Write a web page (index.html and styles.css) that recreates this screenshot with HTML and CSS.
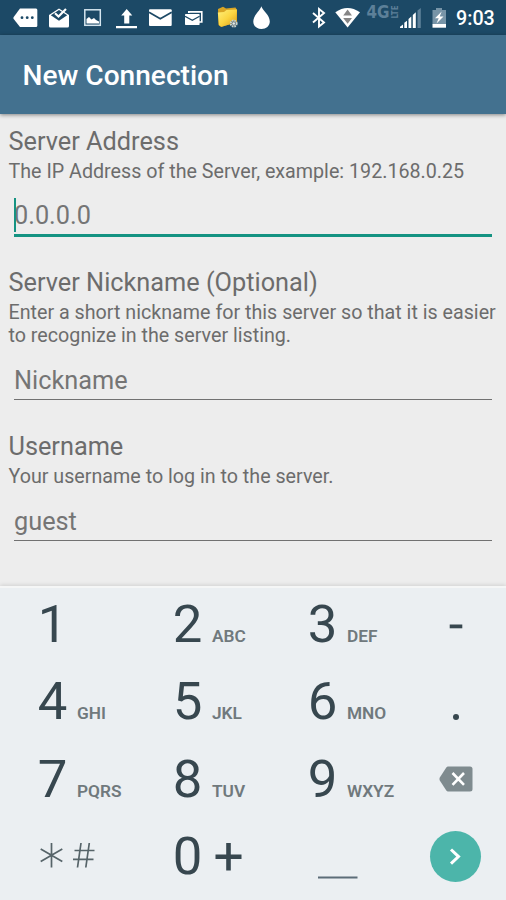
FILE: index.html
```html
<!DOCTYPE html>
<html lang="en">
<head>
<meta charset="utf-8">
<title>New Connection</title>
<link rel="stylesheet" href="styles.css">
</head>
<body>
<div class="screen">
  <div class="status">
    <div class="status-group">
      <svg class="icon" width="25" height="35" viewBox="13 0 25 35"><path d="M20 8.500H36Q37.300 8.500 37.300 10V25.500Q37.300 27 36 27H20L13.500 18.700Q13.200 17.700 13.700 17Z" fill="#fff"/><g fill="#1c4966"><circle cx="22" cy="17.700" r="1.400"/><circle cx="27.200" cy="17.700" r="1.400"/><circle cx="32.300" cy="17.700" r="1.400"/></g></svg>
      <svg class="icon" width="21" height="35" viewBox="49 0 21 35"><path d="M49 15L59 8.500L69 15V26Q69 27.500 67.500 27.500H50.500Q49 27.500 49 26Z" fill="#fff"/><path d="M50.800 15.200L59 10L67.200 15.200L59 20.700Z" fill="#1c4966"/><path d="M55 13.300L58.500 16.500L66 9" fill="none" stroke="#fff" stroke-width="2.200"/></svg>
      <svg class="icon" width="18" height="35" viewBox="84 0 18 35"><rect x="84.800" y="9.800" width="15.500" height="15.500" fill="none" stroke="#d5e5ef" stroke-width="1.500"/><path d="M86.500 23.500V19L89 17L91.500 19.500L94 18L96 20L99 21.500V23.500Z" fill="#fff"/></svg>
      <svg class="icon" width="22" height="35" viewBox="116 0 22 35"><path d="M126.700 9L132.300 15.500H129.300V23.500H124.200V15.500H121.200ZM116 26H137V28.200H116Z" fill="#fff"/></svg>
      <svg class="icon" width="24" height="35" viewBox="149 0 24 35"><rect x="149" y="9.300" width="22.700" height="16.700" rx="1" fill="#fff"/><path d="M149 12.300L160.300 18.700L171.700 12.300" fill="none" stroke="#1c4966" stroke-width="1.700"/></svg>
      <svg class="icon" width="19" height="35" viewBox="185 0 19 35"><path d="M188.800 13V11.900H201.800V22H199" fill="none" stroke="#fff" stroke-width="1.600"/><rect x="185" y="14" width="14.600" height="11" rx=".7" fill="#fff"/><path d="M185 16.300L192.300 20.300L199.600 16.300" fill="none" stroke="#1c4966" stroke-width="1.300"/></svg>
      <svg class="icon" width="22" height="35" viewBox="217 0 22 35">
        <defs><linearGradient id="folder" x2="1" y2="1"><stop stop-color="#fff07b"/><stop offset=".5" stop-color="#fbd541"/><stop offset="1" stop-color="#d99b17"/></linearGradient></defs>
        <path d="M218 9L223 6.800L226 8.500L235.500 7.500L237 10V22L221 27L218.500 25Z" fill="#d9a524"/><path d="M217.800 12.500L224 12L226.500 10L237 9.500L236 22.500L221.500 26.700L219 25Z" fill="url(#folder)"/><circle cx="233.700" cy="23.500" r="3" fill="#65787d" stroke="#cbd3ce" stroke-width="1.900" stroke-dasharray="1.600 .8"/><circle cx="233.700" cy="23.500" r="1.300" fill="#e7ece9"/></svg>
      <svg class="icon" width="18" height="35" viewBox="253 0 18 35"><path d="M261.300 6.300C263 11 269.800 15.200 269.800 21.500C269.800 26 266.200 29 261.500 29S253.300 26 253.300 21.500C253.300 15.200 260 11 261.300 6.300Z" fill="#fff"/></svg>
    </div>
    <div class="status-group">
      <svg class="icon" width="14" height="35" viewBox="312 0 14 35"><path d="M313 13L324 22.500L319 26.500V9L324 13L313 22.500" fill="none" stroke="#fff" stroke-width="1.900"/></svg>
      <svg class="icon" width="26" height="35" viewBox="335 0 26 35"><path d="M335.300 12.300Q347.500 3.500 360 12.300L347.600 27.500Z" fill="#fff"/><path d="M347.600 9.500L352 15.500H343.200ZM347.600 23.800L352 18H343.200Z" fill="#858585"/></svg>
      <svg class="icon network" width="32" height="35" viewBox="367 0 32 35"><text class="network-gen" transform="translate(366.500 18) scale(1.050 1)" textLength="22" lengthAdjust="spacingAndGlyphs">4G</text><text class="network-lte" transform="translate(397.500 18.500) rotate(-90)" textLength="13" lengthAdjust="spacingAndGlyphs">LTE</text></svg>
      <svg class="icon" width="22" height="35" viewBox="400 0 22 35"><path d="M417.500 10.500L420.800 8V28H417.500Z" fill="#5d8099"/><path d="M400 28V26.700L403 24.500V28ZM404.300 28V22.800L407 20.700V28ZM408.500 28V19L411.300 16.500V28ZM412.800 28V15L415.800 12.300V28Z" fill="#fff"/></svg>
      <svg class="icon" width="15" height="35" viewBox="432 0 15 35"><path d="M436 8H442V10H446V24.500H432.500V10H436Z" fill="#7794a7"/><path d="M432.500 24H446V27.700H432.500Z" fill="#fff"/><path d="M441.700 11.500L435 18.200H438.700L436.500 23.500L443.500 16.500H439.700Z" fill="#fff"/></svg>
      <span class="clock">9:03</span>
    </div>
  </div>
  <header class="appbar"><h1 class="title">New Connection</h1></header>
  <main class="form">
    <section class="field">
      <h2 class="label">Server Address</h2>
      <p class="help">The IP Address of the Server, example: 192.168.0.25</p>
      <div class="input input-active">0.0.0.0</div>
    </section>
    <section class="field">
      <h2 class="label">Server Nickname (Optional)</h2>
      <p class="help">Enter a short nickname for this server so that it is easier<br>to recognize in the server listing.</p>
      <div class="input">Nickname</div>
    </section>
    <section class="field">
      <h2 class="label">Username</h2>
      <p class="help">Your username to log in to the server.</p>
      <div class="input">guest</div>
    </section>
  </main>
  <div class="keypad">
    <div class="key"><span class="digit">1</span></div>
    <div class="key"><span class="digit">2</span><span class="letters">ABC</span></div>
    <div class="key"><span class="digit">3</span><span class="letters">DEF</span></div>
    <div class="key side"><svg width="14" height="73" viewBox="0 0 14 73"><path d="M.7 36.500H13.300V40.300H.7Z" fill="#37474f"/></svg></div>
    <div class="key"><span class="digit">4</span><span class="letters">GHI</span></div>
    <div class="key"><span class="digit">5</span><span class="letters">JKL</span></div>
    <div class="key"><span class="digit">6</span><span class="letters">MNO</span></div>
    <div class="key side"><svg width="8" height="73" viewBox="0 0 8 73"><circle cx="4" cy="52" r="3" fill="#37474f"/></svg></div>
    <div class="key"><span class="digit">7</span><span class="letters">PQRS</span></div>
    <div class="key"><span class="digit">8</span><span class="letters">TUV</span></div>
    <div class="key"><span class="digit">9</span><span class="letters">WXYZ</span></div>
    <div class="key side"><svg width="34" height="26" viewBox="0 0 34 26"><path d="M9 .5H31Q33.500 .5 33.500 3V23Q33.500 25.500 31 25.500H9Q8 25.500 7.300 24.500L.8 14.500Q0 13 .8 11.500L7.300 1.500Q8 .5 9 .5Z" fill="#7f8b8f"/><path d="M13.500 7L25 18.800M25 7L13.500 18.800" fill="none" stroke="#fff" stroke-width="2.600"/></svg></div>
    <div class="key"><svg class="symbols" width="60" height="77" viewBox="0 0 60 77"><g fill="none" stroke="#566469" stroke-width="1.700"><path d="M14.500 26V50.500M3.700 32L25.300 44.500M25.300 32L3.700 44.500M44 26L40.500 50.500M52.300 26L48.800 50.500M37.500 33.500H57.500M36 42.300H56.500"/></g></svg></div>
    <div class="key"><span class="digit">0</span><svg class="plus" width="28" height="77" viewBox="0 0 28 77"><path d="M13.500 26V53.500M.5 39.700H26.500" fill="none" stroke="#37474f" stroke-width="4.600"/></svg></div>
    <div class="key"><svg class="space" width="40" height="77" viewBox="0 0 40 77"><path d="M0 60.500H39.500" stroke="#5c6d78" stroke-width="2"/></svg></div>
    <div class="key side"><div class="go"><svg width="51" height="51" viewBox="0 0 51 51"><path d="M21 18.500L28.500 25.600L21 32.700" fill="none" stroke="#fff" stroke-width="3"/></svg></div></div>
  </div>
</div>
</body>
</html>
```

FILE: styles.css
```css
* { box-sizing: border-box; }
body { margin: 0; font-family: Roboto, "Liberation Sans", sans-serif; }
h1, h2, p { margin: 0; font-weight: 400; }
svg { display: block; flex: none; }
.screen { width: 506px; height: 900px; display: flex; flex-direction: column; background: #ededed; overflow: hidden; }

.status { height: 35px; flex: none; display: flex; justify-content: space-between; padding: 0 11px 0 13px; background: #1c4966; color: #fff; }
.status-group { display: flex; }
.status-group:first-child { gap: 12px; }
.status-group:first-child .icon:nth-child(2) { margin-left: -1px; }
.status-group:first-child .icon:nth-child(3),
.status-group:first-child .icon:nth-child(4) { margin-left: 2px; }
.status-group:first-child .icon:nth-child(5) { margin-left: -1px; }
.status-group:first-child .icon:nth-child(7) { margin-left: 1px; }
.status-group:first-child .icon:nth-child(8) { margin-left: 2px; }
.status-group:last-child .icon:nth-child(2) { margin-left: 9px; }
.status-group:last-child .icon:nth-child(3) { margin-left: 6px; }
.status-group:last-child .icon:nth-child(4) { margin-left: 1px; }
.status-group:last-child .icon:nth-child(5) { margin-left: 10px; }
.clock { width: 39px; margin-left: 9px; font-size: 19.7px; font-weight: 500; line-height: 38px; white-space: nowrap; }
.network { fill: #5d8099; font-family: "DejaVu Sans", sans-serif; font-weight: 700; overflow: visible; }
.network-gen { font-size: 17px; }
.network-lte { font-size: 9px; }

.appbar { height: 79px; flex: none; display: flex; align-items: center; padding: 3px 0 0 22.5px; background: #43718f; box-shadow: 0 1px 4px rgba(0, 0, 0, .45); }
.title { font-size: 28.1px; font-weight: 500; line-height: 32px; color: #fff; }

.form { flex: 1; padding: 12.6px 8px 0 8.5px; color: #6c6c6c; }
.field { margin-bottom: 32.2px; }
.field:first-child { margin-bottom: 31px; }
.label { font-size: 25.3px; line-height: 30px; }
.help { font-size: 19.7px; line-height: 23.2px; margin-top: 3px; white-space: nowrap; }
.input { height: 44.5px; margin: 8px 6px 0 5.5px; padding-top: 8px; font-size: 25.3px; line-height: 36px; color: #757575; border-bottom: 1.5px solid #717171; }
.input-active { position: relative; height: 46px; padding-top: 7.4px; border-bottom: 3px solid #159382; }
.input-active::before { content: ""; position: absolute; left: 0; top: 7px; width: 2px; height: 34px; background: #159382; }

.keypad { height: 314px; flex: none; display: grid; grid-template-columns: 135px 135px 135px 101px; grid-template-rows: repeat(4, 77.3px); background: #ebeff2; border-top: 2px solid #f5f6f6; box-shadow: 0 -1px 4px rgba(0, 0, 0, .12); }
.key { display: flex; align-items: baseline; padding-left: 37.7px; color: #37474f; }
.digit { width: 39.3px; font-size: 52.7px; line-height: 72px; }
.letters { font-size: 17.3px; font-weight: 600; color: #70797d; }
.side { align-items: center; justify-content: center; padding: 0 0 5px; }
.symbols { align-self: flex-start; margin: -2.5px 0 0 -.7px; }
.plus { align-self: flex-start; margin-left: 3px; margin-top: -3px; }
.space { align-self: flex-start; margin-left: 10.3px; margin-top: -2.5px; }
.go { width: 51px; height: 51px; border-radius: 50%; background: #4cb5aa; }
```
